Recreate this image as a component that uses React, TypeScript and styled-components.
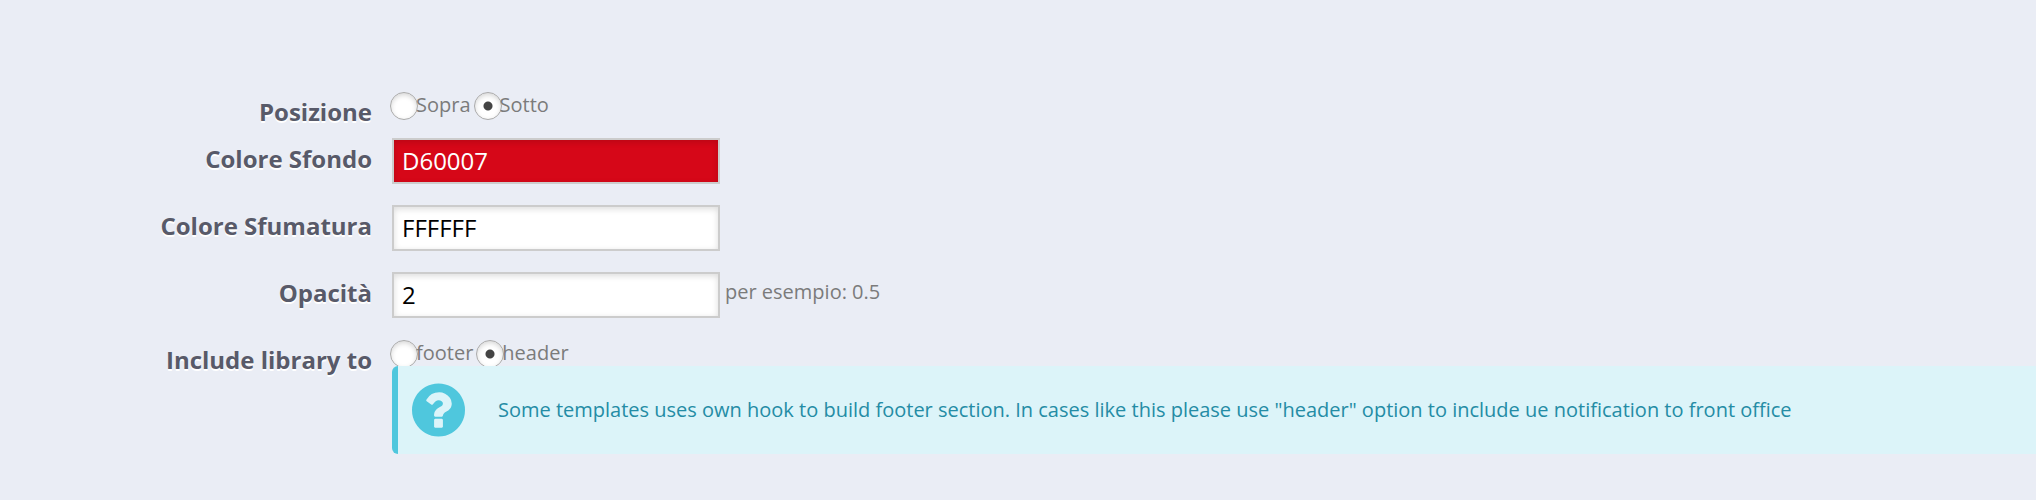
import React, { useState } from "react";
import styled, { createGlobalStyle } from "styled-components";

const GlobalStyle = createGlobalStyle`
  *, *::before, *::after { box-sizing: border-box; }
  body {
    margin: 0;
    background: #eaedf5;
    color: #7b7b7b;
    font-family: "Open Sans", "Noto Sans", sans-serif;
    font-size: 20px;
    line-height: 28px;
  }
`;

const Form = styled.form`
  display: flex;
  flex-direction: column;
  gap: 21px;
  padding: 91px 0 46px;
`;

const Row = styled.div<{ $compact?: boolean }>`
  display: flex;
  align-items: flex-start;
  gap: 20px;
  margin-bottom: ${(p) => (p.$compact ? "-12px" : "0")};
`;

const labelText = `
  flex: none;
  width: 372px;
  padding-top: 4px;
  color: #585a69;
  font-size: 24px;
  font-weight: 700;
  line-height: 34px;
  text-align: right;
  text-shadow: 0 2px 0 #fff;
`;

const Label = styled.label`
  ${labelText}
`;

const GroupLabel = styled.span`
  ${labelText}
`;

const Content = styled.div`
  flex: 1;
  min-width: 0;
  display: flex;
  flex-direction: column;
`;

const FieldLine = styled.div`
  display: flex;
  align-items: center;
  gap: 5px;
`;

const TextInput = styled.input<{ $fill: string; $ink: string }>`
  width: 328px;
  height: 46px;
  margin: 0;
  padding: 0 8px 2px;
  border: 2px solid #ccc;
  border-radius: 0;
  outline: none;
  background: ${(p) => p.$fill};
  color: ${(p) => p.$ink};
  box-shadow: inset 0 2px 6px rgba(0, 0, 0, 0.14);
  font: inherit;
  font-size: 24px;
`;

const Hint = styled.span`
  padding-bottom: 6px;
`;

const RadioGroup = styled.div`
  display: flex;
  gap: 3px;
  height: 27px;
  margin-left: -2px;
`;

const RadioLabel = styled.label`
  display: flex;
  line-height: 28px;
`;

const Radio = styled.input`
  appearance: none;
  flex: none;
  width: 28px;
  height: 28px;
  margin: 1px -2px 0 0;
  border: 1px solid #aaa;
  border-radius: 50%;
  background: #fff;
  box-shadow: inset 0 2px 5px rgba(0, 0, 0, 0.16);

  &:checked {
    background: radial-gradient(circle, #444 0 4px, #fff 5px);
  }
`;

const RadioText = styled.span`
  position: relative;
`;

const Alert = styled.div`
  display: flex;
  align-items: center;
  gap: 33px;
  min-height: 88px;
  padding: 17px 14px;
  border-left: 6px solid #4fc7dd;
  border-radius: 6px 0 0 6px;
  background: #dcf4f9;
  color: #248ca5;
  line-height: 28px;
`;

const HelpIcon = styled.svg`
  flex: none;
  display: block;
  width: 53px;
  height: 54px;
`;

type RadioProps = { name: string; options: string[]; initial: string; labelledBy: string };

function Radios({ name, options, initial, labelledBy }: RadioProps) {
  const [value, setValue] = useState(initial);
  return (
    <RadioGroup role="radiogroup" aria-labelledby={labelledBy}>
      {options.map((option) => (
        <RadioLabel key={option}>
          <Radio
            type="radio"
            name={name}
            value={option}
            checked={value === option}
            onChange={() => setValue(option)}
          />
          <RadioText>{option}</RadioText>
        </RadioLabel>
      ))}
    </RadioGroup>
  );
}

type FieldProps = {
  id: string;
  label: string;
  value: string;
  fill?: string;
  ink?: string;
  hint?: string;
};

function Field({ id, label, value, fill = "#fff", ink = "#000", hint }: FieldProps) {
  return (
    <Row>
      <Label htmlFor={id}>{label}</Label>
      <Content>
        <FieldLine>
          <TextInput id={id} type="text" defaultValue={value} $fill={fill} $ink={ink} />
          {hint && <Hint>{hint}</Hint>}
        </FieldLine>
      </Content>
    </Row>
  );
}

export default function App() {
  return (
    <>
      <GlobalStyle />
      <Form>
        <Row $compact>
          <GroupLabel id="position-label">Posizione</GroupLabel>
          <Content>
            <Radios name="position" options={["Sopra", "Sotto"]} initial="Sotto" labelledBy="position-label" />
          </Content>
        </Row>
        <Field id="background" label="Colore Sfondo" value="D60007" fill="#d60718" ink="#fff" />
        <Field id="gradient" label="Colore Sfumatura" value="FFFFFF" />
        <Field id="opacity" label="Opacità" value="2" hint="per esempio: 0.5" />
        <Row>
          <GroupLabel id="library-label">Include library to</GroupLabel>
          <Content>
            <Radios name="library" options={["footer", "header"]} initial="header" labelledBy="library-label" />
            <Alert>
              <HelpIcon viewBox="0 0 1536 1536" aria-hidden="true">
                <path
                  fill="#4fc7dd"
                  d="M896 1248v-192q0-14-9-23t-23-9H672q-14 0-23 9t-9 23v192q0 14 9 23t23 9h192q14 0 23-9t9-23zm256-672q0-88-55.500-163T958 297t-170-41q-243 0-371 213-15 24 8 42l132 100q7 6 19 6 16 0 25-12 53-68 86-92 34-24 86-24 48 0 85.500 26t37.500 59q0 38-20 61t-68 45q-63 28-115.500 86.500T640 892v36q0 14 9 23t23 9h192q14 0 23-9t9-23q0-19 21.500-49.500T972 829q32-18 49-28.500t46-35 44.500-48 28-60.500 12.500-81zm384 192q0 209-103 385.500T1153.500 1433 768 1536t-385.500-103T103 1153.500 0 768t103-385.500T382.500 103 768 0t385.500 103T1433 382.500 1536 768z"
                />
              </HelpIcon>
              <span>
                Some templates uses own hook to build footer section. In cases like this please use "header" option to
                include ue notification to front office
              </span>
            </Alert>
          </Content>
        </Row>
      </Form>
    </>
  );
}
